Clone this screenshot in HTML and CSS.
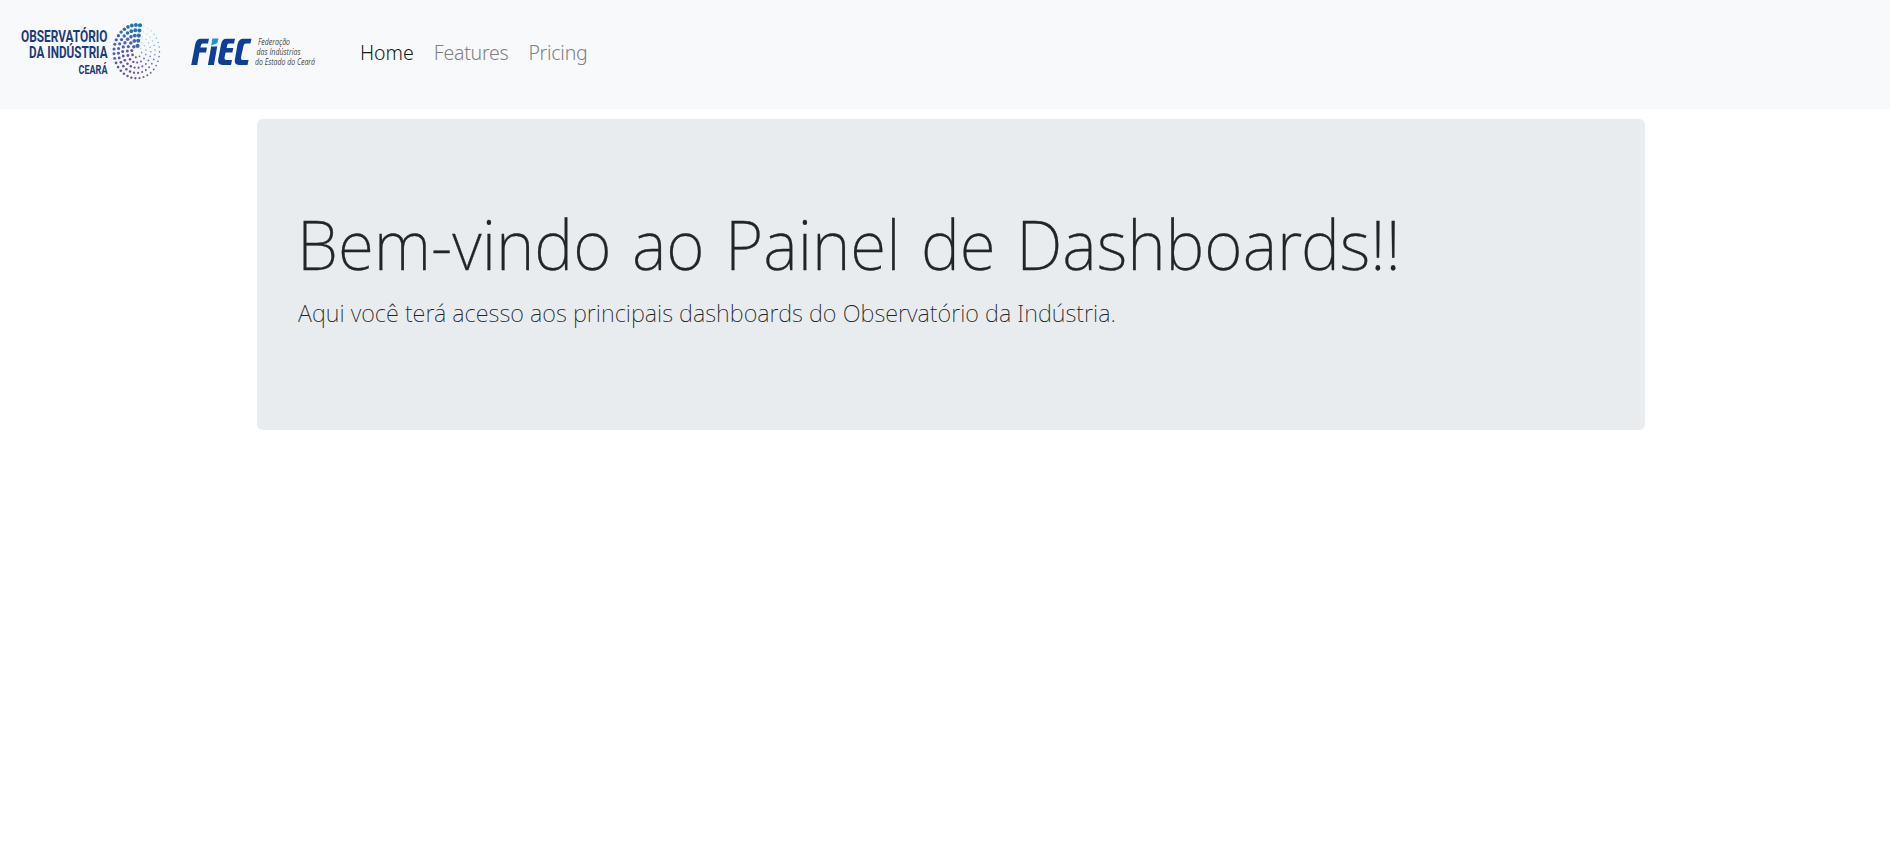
FILE: index.html
```html
<!DOCTYPE html>
<html lang="pt-BR">
<head>
<meta charset="utf-8">
<title>Painel de Dashboards</title>
<link rel="stylesheet" href="styles.css">
</head>
<body>
<nav class="navbar">
  <a class="brand" href="#" aria-label="Observatório da Indústria Ceará">
    <svg class="logo-obs" width="150" height="72" viewBox="0 0 150 72">
      <g class="obs-text" text-anchor="end">
        <text x="87.5" y="27" textLength="86.5" lengthAdjust="spacingAndGlyphs" font-size="16.5">OBSERVATÓRIO</text>
        <text x="87.5" y="43" textLength="78.5" lengthAdjust="spacingAndGlyphs" font-size="16.5">DA INDÚSTRIA</text>
        <text x="87.5" y="58.5" textLength="29" lengthAdjust="spacingAndGlyphs" font-size="13.5">CEARÁ</text>
      </g>
      <g id="dots"></g>
    </svg>
  </a>
  <a class="brand" href="#" aria-label="FIEC">
    <svg class="logo-fiec" width="130" height="40" viewBox="0 0 130 40">
      <g fill="#0d3f97" transform="translate(0 .6)">
        <path d="M5.3 9.5Q6.4 4.2 11 4.2H19L18 9H12.9Q11.2 9 10.8 11L10.4 13H17L16 17.8H9.4L7.2 30.4H1.2Z"/>
        <path d="M21.2 12H27.2L23.9 30.4H17.9Z"/>
        <path d="M36 4.2H45L44 9H38.8Q37.5 9 37.2 10.5L36.6 13.3H43.3L42.3 18H35.6L34.5 23Q34.1 25.4 36.1 25.4H42L41 30.4H32.5Q27.3 30.4 28.2 25L31 10Q32.1 4.2 36 4.2Z"/>
        <path d="M53.2 4.2H61.5L60.4 9H56Q54 9 53.6 11L51 23Q50.5 25.4 52.5 25.4H58.6L57.5 30.4H49Q43.9 30.4 44.9 25L47.5 10Q48.7 4.2 53.2 4.2Z"/>
      </g>
      <path fill="#1595dc" d="M22.4 4.4H28.4L27.4 9L21.2 11.6Z"/>
      <g class="fiec-text">
        <text x="68" y="11" textLength="32" lengthAdjust="spacingAndGlyphs">Federação</text>
        <text x="66.5" y="21" textLength="44" lengthAdjust="spacingAndGlyphs">das Indústrias</text>
        <text x="65" y="31" textLength="60" lengthAdjust="spacingAndGlyphs">do Estado do Ceará</text>
      </g>
    </svg>
  </a>
  <div class="links">
    <a class="link active" href="#">Home</a>
    <a class="link" href="#">Features</a>
    <a class="link" href="#">Pricing</a>
  </div>
</nav>
<main class="jumbotron">
  <h1 class="title">Bem-vindo ao Painel de Dashboards!!</h1>
  <p class="lead">Aqui você terá acesso aos principais dashboards do Observatório da Indústria.</p>
</main>
<script src="dots.js"></script>
</body>
</html>
```
FILE: styles.css
```css
* { box-sizing: border-box; }
body { margin: 0; background: #fff; color: #212529; font-family: "Noto Sans", "Open Sans", sans-serif; }
.navbar { display: flex; align-items: flex-start; height: 109px; padding: 15px 20px; background: #f8f9fb; }
.brand { display: block; }
.logo-obs { display: block; }
.logo-fiec { display: block; margin: 19px 0 0 20px; overflow: visible; }
.obs-text { font-family: Roboto, sans-serif; font-weight: 700; fill: #1c3b7a; }
.fiec-text { font-family: "Open Sans", sans-serif; font-style: italic; font-size: 9px; fill: #444; }
.links { display: flex; gap: 20px; padding: 23px 0 0 40px; }
.link { font-size: 19.5px; line-height: 30px; font-weight: 300; color: #808182; text-decoration: none; letter-spacing: -.25px; }
.link.active { color: #18191a; letter-spacing: 0; }
.jumbotron { width: 1388px; height: 311px; margin: 10px 0 0 257px; padding: 82px 41px 0; background: #e8ecef; border-radius: 6px; }
.title, .lead { width: max-content; font-weight: 200; white-space: nowrap; transform-origin: 0 50%; }
.title { margin: 0 0 0 -1px; font-size: 69px; line-height: 84px; word-spacing: 3.5px; transform: scaleX(.955); -webkit-text-stroke: .3px #212529; }
.lead { margin: 9px 0 0; font-size: 24.5px; line-height: 37px; transform: scaleX(.96); }
```
FILE: dots.js
```js
// Concentric rings of dots that shrink and fade counter-clockwise from the top.
const rings = [[22.8, 26.7, 35], [18.3, 21.4, 28], [14, 16.2, 22], [9.4, 11, 15], [5, 5.8, 8]];
const stops = [[0, 14, 122, 190], [0.22, 72, 100, 178], [0.5, 112, 78, 166], [0.72, 120, 108, 190], [0.85, 130, 170, 220], [1, 190, 222, 240]];
function colorAt(t) {
  let i = 1;
  while (stops[i][0] < t) i++;
  const a = stops[i - 1], b = stops[i], k = (t - a[0]) / (b[0] - a[0]);
  return "rgb(" + [1, 2, 3].map(c => Math.round(a[c] + (b[c] - a[c]) * k)).join(",") + ")";
}
const group = document.getElementById("dots");
rings.forEach(([rx, ry, n], ring) => {
  const start = Math.asin((3.3 - ring * 0.6) / rx);
  for (let i = 0; i < n; i++) {
    const t = i / n, angle = start - t * 2 * Math.PI;
    const dot = document.createElementNS("http://www.w3.org/2000/svg", "circle");
    dot.setAttribute("cx", (116.7 + rx * Math.sin(angle)).toFixed(2));
    dot.setAttribute("cy", (36.6 - ry * Math.cos(angle)).toFixed(2));
    dot.setAttribute("r", (2.05 - 1.55 * Math.pow(t, 0.8)).toFixed(2));
    dot.setAttribute("fill", colorAt(Math.min(1, t + ring * 0.05 * (1 - t))));
    group.appendChild(dot);
  }
});
```
